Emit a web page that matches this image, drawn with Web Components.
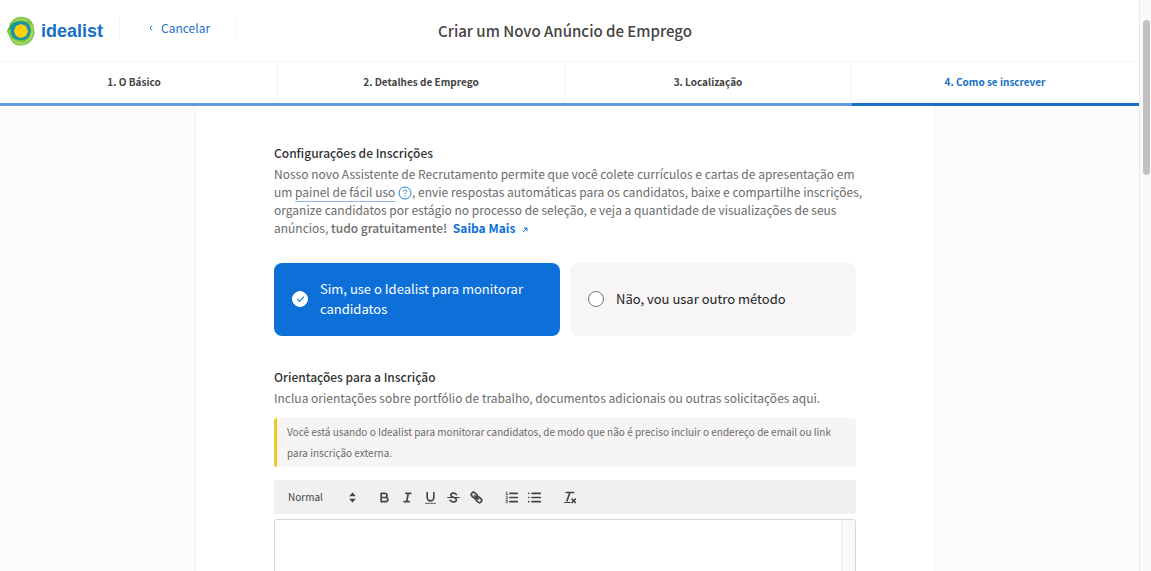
<!DOCTYPE html>
<html lang="pt-BR">
<head>
<meta charset="UTF-8">
<meta name="viewport" content="width=device-width, initial-scale=1">
<title>Criar um Novo Anúncio de Emprego</title>
<style>
    body {
        margin: 0;
        font-family: "Noto Sans CJK SC", "Noto Sans", sans-serif;
        background: #fbfbfb;
    }
</style>
</head>
<body>
<job-app></job-app>

<script>
// -------------------------------------------------
// <idealist-logo>
// -------------------------------------------------
class IdealistLogo extends HTMLElement {
    constructor() {
        super();
        this.attachShadow({ mode: "open" });
        this.shadowRoot.innerHTML = `
    <style>
    :host { display: block; }
    a {
        display: flex;
        align-items: center;
        gap: 6px;
        color: #176fc6;
        font: bold 18px/24px "Liberation Sans", Arial, sans-serif;
        text-decoration: none;
    }
    svg { display: block; width: 28px; height: 30px; }
    </style>
    <a href="#">
        <svg viewBox="0 0 28 30" aria-hidden="true">
            <path d="M12 1C16 0 19 2 22 3C26 6 27 10 27 13C29 18 26 23 23 26C19 30 14 30 9 29C5 27 3 23 2 19C0 17 -1 14 2 12C2 6 7 2 12 1Z" fill="#7cc44a"/>
            <path d="M6 7C10 3 16 2 20 5M24 9C27 15 25 22 19 26M5 23C9 27 14 28 19 27" fill="none" stroke="#a9d75c" stroke-width="2"/>
            <path d="M0 14C2 12 4 9 6 7C10 5 15 5 19 6C23 9 25 13 23 18C22 22 18 25 13 24C8 24 4 21 4 16L4 12Z" fill="#149a8c"/>
            <path d="M6 11C9 7 14 6 18 8C22 10 24 15 21 19C19 23 12 24 9 21C6 19 4 15 6 11Z" fill="#1f93bd"/>
            <path d="M9 10L14 8L19 10L21 15L19 20L14 22L9 20L7 15Z" fill="#ffd008"/>
        </svg>
        <span>idealist</span>
    </a>`;
    }
}

// -------------------------------------------------
// <page-header>
// -------------------------------------------------
class PageHeader extends HTMLElement {
    constructor() {
        super();
        this.attachShadow({ mode: "open" });
        this.shadowRoot.innerHTML = `
    <style>
    :host {
        display: grid;
        grid-template-columns: 1fr auto 1fr;
        align-items: center;
        height: 61px;
        padding-left: 16px;
        padding-right: 16px;
        background: #fff;
        border-bottom: 1px solid #f6f6f6;
    }
    .left { display: flex; align-items: center; }
    .cancel {
        display: flex;
        align-items: center;
        gap: 8px;
        height: 26px;
        margin-left: 16px;
        margin-bottom: 6px;
        padding: 0 25px 0 29px;
        border-left: 1px solid #f4f4f4;
        border-right: 1px solid #f4f4f4;
        color: #176fc6;
        font-size: 12px;
        line-height: 24px;
        text-decoration: none;
    }
    .cancel svg { width: 4px; height: 6px; }
    h1 {
        margin: 0;
        color: #444;
        font-size: 15px;
        line-height: 24px;
        font-weight: 500;
    }
    </style>
    <div class="left">
        <idealist-logo></idealist-logo>
        <a class="cancel" href="#">
            <svg viewBox="0 0 4 6" fill="none" stroke="currentColor" aria-hidden="true"><path d="M3 .7L1 3L3 5.3"/></svg>
            Cancelar
        </a>
    </div>
    <h1><slot></slot></h1>`;
    }
}

// -------------------------------------------------
// <step-tab>
// -------------------------------------------------
class StepTab extends HTMLElement {
    constructor() {
        super();
        this.attachShadow({ mode: "open" });
        this.shadowRoot.innerHTML = `
    <style>
    :host {
        display: block;
        flex: 1 1 0;
        background: #fff;
        border-bottom: 3px solid #619ade;
    }
    :host([active]) { border-bottom-color: #176fc6; }
    a {
        display: block;
        margin: 2px 0 3px;
        border-right: 1px solid #f3f3f3;
        color: #444;
        font-size: 10px;
        line-height: 36px;
        font-weight: 700;
        text-align: center;
        text-decoration: none;
    }
    :host([active]) a { color: #176fc6; border-right-color: transparent; }
    </style>
    <a href="#"><slot></slot></a>`;
    }
}

// -------------------------------------------------
// <option-card>
// -------------------------------------------------
class OptionCard extends HTMLElement {
    constructor() {
        super();
        this.attachShadow({ mode: "open" });
        this.shadowRoot.innerHTML = `
    <style>
    :host { display: grid; flex: 1 1 0; }
    label {
        display: flex;
        align-items: center;
        gap: 12px;
        min-height: 73px;
        box-sizing: border-box;
        padding: 0 30px 1px 18px;
        border-radius: 8px;
        background: #f7f5f6;
        color: #222;
        font-size: 13px;
        line-height: 20px;
        cursor: pointer;
    }
    input {
        appearance: none;
        display: grid;
        place-items: center;
        flex: none;
        width: 16px;
        height: 16px;
        margin: 0;
        border: 1px solid #777;
        border-radius: 50%;
        background: #fff;
    }
    input:checked { border-color: #fff; }
    input:checked::after {
        content: "";
        width: 6px;
        height: 3px;
        margin-bottom: 2px;
        border-left: 1px solid #0d70d9;
        border-bottom: 1px solid #0d70d9;
        transform: rotate(-45deg);
    }
    label:has(input:checked) { background: #0d70d9; color: #fff; }
    </style>
    <label><input type="radio"><span><slot></slot></span></label>`;
    }

    connectedCallback() {
        this.shadowRoot.querySelector("input").checked = this.hasAttribute("checked");
    }
}

// -------------------------------------------------
// <note-box>
// -------------------------------------------------
class NoteBox extends HTMLElement {
    constructor() {
        super();
        this.attachShadow({ mode: "open" });
        this.shadowRoot.innerHTML = `
    <style>
    :host {
        display: block;
        padding: 3px 8px 4px 10px;
        border-left: 3px solid #edc81e;
        border-radius: 3px;
        background: #f6f4f5;
        color: #6b6b6b;
        font-size: 10px;
        line-height: 21px;
    }
    </style>
    <slot></slot>`;
    }
}

// -------------------------------------------------
// <rich-editor>
// -------------------------------------------------
const TOOLS = [
    [
        ["Negrito", `<path d="M5 4h4.5a2.5 2.5 0 0 1 0 5H5zM5 9h5.5a2.5 2.5 0 0 1 0 5H5z"/>`],
        ["Itálico", `<path d="M7 4h6M5 14h6M8 14l2-10"/>`],
        ["Sublinhado", `<path d="M5 3v6a4 4 0 0 0 8 0V3"/><path d="M3 16h12" stroke-width="1"/>`],
        ["Tachado", `<path d="M12.5 5.5C11.5 3.7 9.5 3.5 8 3.8C5 4.5 5 7.5 8 8.5L10.5 9.3C13.5 10.5 13 14 10 14.3C8 14.6 6 14 5 12.3"/><path d="M2 9h14" stroke-width="1.2"/>`],
        ["Link", `<path d="M7 7l4 4"/><rect x="2.4" y="3.8" width="8" height="5.2" rx="2.6" transform="rotate(45 6.4 6.4)"/><rect x="7.6" y="9" width="8" height="5.2" rx="2.6" transform="rotate(45 11.6 11.6)"/>`]
    ],
    [
        ["Lista numerada", `<path d="M7 4h9M7 9h9M7 14h9"/><path d="M2.5 5.5h2M3.5 5.5v-3l-1 .5M2.4 8C3 7 4.5 7.5 4.2 8.4L2.4 10.5h2.1M2.4 12.6h1.8l-1 1.2c1.8 0 1.4 1.8-.8 1.6" stroke-width="1"/>`],
        ["Lista", `<path d="M6 4h10M6 9h10M6 14h10M2 4h.1M2 9h.1M2 14h.1"/>`]
    ],
    [
        ["Limpar formatação", `<path d="M5 3h9M6 13l3.5-10"/><path d="M3 15h7" stroke-width="1.2"/><path d="M12 11l4 4M16 11l-4 4"/>`]
    ]
];

class RichEditor extends HTMLElement {
    constructor() {
        super();
        this.attachShadow({ mode: "open" });
        const groups = TOOLS.map(group => `<div class="group">${group.map(([name, icon]) =>
            `<button type="button" aria-label="${name}"><svg viewBox="0 0 18 18">${icon}</svg></button>`
        ).join("")}</div>`).join("");

        this.shadowRoot.innerHTML = `
    <style>
    :host { display: block; }
    .toolbar {
        display: flex;
        align-items: center;
        gap: 12px;
        height: 34px;
        padding: 0 7px;
        border-radius: 3px;
        background: #f0f0f0;
    }
    .picker { display: grid; align-items: center; width: 80px; }
    .picker > * { grid-area: 1 / 1; }
    select {
        appearance: none;
        width: 100%;
        padding: 0 7px;
        border: 0;
        background: none;
        color: #444;
        font-family: inherit;
        font-size: 10px;
        line-height: 20px;
    }
    .picker svg {
        justify-self: end;
        width: 15px;
        height: 15px;
        margin-right: 1px;
        fill: #444;
        pointer-events: none;
    }
    .group { display: flex; }
    button {
        display: grid;
        place-items: center;
        width: 23px;
        height: 20px;
        padding: 0;
        border: 0;
        background: none;
        cursor: pointer;
    }
    button svg {
        width: 15px;
        height: 15px;
        fill: none;
        stroke: #444;
        stroke-width: 2;
        stroke-linecap: round;
        stroke-linejoin: round;
    }
    .area {
        display: flex;
        height: 164px;
        margin-top: 5px;
        border: 1px solid #d7d7d7;
        border-radius: 3px;
        background: #fff;
    }
    textarea {
        flex: 1;
        min-width: 0;
        padding: 10px;
        border: 0;
        outline: 0;
        resize: none;
        background: none;
        font: inherit;
        font-size: 12px;
    }
    .track { width: 13px; border-left: 1px solid #ececec; background: #f9f9f9; }
    </style>
    <div class="toolbar">
        <div class="picker">
            <select aria-label="Estilo"><option>Normal</option></select>
            <svg viewBox="0 0 18 18" aria-hidden="true"><path d="M5 7.5L9 3L13 7.5ZM5 10.5L9 15L13 10.5Z"/></svg>
        </div>
        ${groups}
    </div>
    <div class="area"><textarea aria-label="Orientações"></textarea><div class="track"></div></div>`;
    }
}

// -------------------------------------------------
// <form-section>
// -------------------------------------------------
class FormSection extends HTMLElement {
    constructor() {
        super();
        this.attachShadow({ mode: "open" });
        this.shadowRoot.innerHTML = `
    <style>
    :host { display: block; color: #6b6b6b; font-size: 12px; line-height: 18px; }
    h2 {
        margin: 0 0 3px;
        color: #333;
        font-size: 12px;
        line-height: 18px;
        font-weight: 500;
    }
    </style>
    <h2>${this.getAttribute("heading")}</h2>
    <slot></slot>`;
    }
}

// -------------------------------------------------
// <job-app>
// -------------------------------------------------
class JobApp extends HTMLElement {
    constructor() {
        super();
        this.attachShadow({ mode: "open" });
        this.shadowRoot.innerHTML = `
    <style>
    :host { display: flex; height: 100vh; overflow: hidden; }
    .page {
        flex: 1;
        min-width: 0;
        margin-left: -9px;
        overflow: hidden;
    }
    nav { display: flex; }
    main {
        max-width: 582px;
        margin: 0 auto;
        padding: 38px 78px 60px;
        border: solid #f5f5f5;
        border-width: 0 1px;
        background: #fff;
    }
    p { margin: 0; }
    .intro { white-space: nowrap; }
    b { font-weight: 500; }
    .hint {
        color: inherit;
        text-decoration: underline;
        text-decoration-color: #8fb6ee;
        text-decoration-thickness: 1px;
        text-underline-offset: 4px;
    }
    .help { width: 14px; height: 14px; vertical-align: -3px; }
    .more { margin-left: 3px; color: #0d70d9; font-weight: 700; text-decoration: none; }
    .more svg { width: 6px; height: 6px; margin-left: 4px; }
    .options { display: flex; gap: 10px; margin: 26px 0 32px; }
    note-box { margin: 11px 0 13px; }
    .scroll {
        width: 12px;
        box-sizing: border-box;
        padding: 20px 1px 0 3px;
        border-left: 1px solid #e9e9e9;
        background: #fafafa;
    }
    .thumb { height: 155px; border-radius: 4px; background: #c1c1c1; }

    @media (max-width: 700px) {
        .intro { white-space: normal; }
        .intro br { display: none; }
    }
    </style>
    <div class="page">
        <page-header>Criar um Novo Anúncio de Emprego</page-header>
        <nav>
            <step-tab>1. O Básico</step-tab>
            <step-tab>2. Detalhes de Emprego</step-tab>
            <step-tab>3. Localização</step-tab>
            <step-tab active>4. Como se inscrever</step-tab>
        </nav>
        <main>
            <form-section heading="Configurações de Inscrições">
                <p class="intro">Nosso novo Assistente de Recrutamento permite que você colete currículos e cartas de apresentação em <br>um <a class="hint" href="#">painel de fácil uso</a> <svg class="help" viewBox="0 0 14 14" fill="none" stroke="#1f7fd6" aria-hidden="true"><circle cx="7" cy="7" r="6"/><path d="M5.3 5.5C5.4 3.5 8.7 3.6 8.6 5.5C8.5 6.7 7 6.7 7 8.2M7 9.4V10.4"/></svg>, envie respostas automáticas para os candidatos, baixe e compartilhe inscrições, <br>organize candidatos por estágio no processo de seleção, e veja a quantidade de visualizações de seus <br>anúncios, <b>tudo gratuitamente!</b> <a class="more" href="#">Saiba Mais <svg viewBox="0 0 6 6" fill="none" stroke="currentColor" aria-hidden="true"><path d="M1 5L5 1M2 1H5V4"/></svg></a></p>
            </form-section>
            <div class="options">
                <option-card checked>Sim, use o Idealist para monitorar candidatos</option-card>
                <option-card>Não, vou usar outro método</option-card>
            </div>
            <form-section heading="Orientações para a Inscrição">
                <p>Inclua orientações sobre portfólio de trabalho, documentos adicionais ou outras solicitações aqui.</p>
            </form-section>
            <note-box>Você está usando o Idealist para monitorar candidatos, de modo que não é preciso incluir o endereço de email ou link para inscrição externa.</note-box>
            <rich-editor></rich-editor>
        </main>
    </div>
    <div class="scroll"><div class="thumb"></div></div>`;
    }
}

// Registro de los componentes
customElements.define("idealist-logo", IdealistLogo);
customElements.define("page-header", PageHeader);
customElements.define("step-tab", StepTab);
customElements.define("option-card", OptionCard);
customElements.define("note-box", NoteBox);
customElements.define("rich-editor", RichEditor);
customElements.define("form-section", FormSection);
customElements.define("job-app", JobApp);
</script>
</body>
</html>
